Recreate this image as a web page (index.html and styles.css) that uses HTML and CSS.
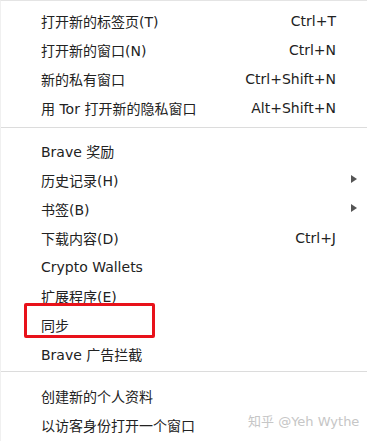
FILE: index.html
```html
<!DOCTYPE html>
<html lang="zh-CN">
<head>
<meta charset="utf-8">
<link rel="stylesheet" href="styles.css">
</head>
<body>
<div class="menu">
  <div class="section first">
    <div class="row"><span class="label">打开新的标签页(T)</span><span class="key">Ctrl+T</span></div>
    <div class="row"><span class="label">打开新的窗口(N)</span><span class="key">Ctrl+N</span></div>
    <div class="row"><span class="label">新的私有窗口</span><span class="key">Ctrl+Shift+N</span></div>
    <div class="row"><span class="label">用 Tor 打开新的隐私窗口</span><span class="key">Alt+Shift+N</span></div>
  </div>
  <div class="sep sep-a"></div>
  <div class="section">
    <div class="row"><span class="label">Brave 奖励</span></div>
    <div class="row"><span class="label">历史记录(H)</span><span class="arrow"></span></div>
    <div class="row"><span class="label">书签(B)</span><span class="arrow"></span></div>
    <div class="row"><span class="label">下载内容(D)</span><span class="key">Ctrl+J</span></div>
    <div class="row"><span class="label">Crypto Wallets</span></div>
    <div class="row"><span class="label">扩展程序(E)</span></div>
    <div class="row highlighted"><span class="label">同步</span><span class="redbox"></span></div>
    <div class="row"><span class="label">Brave 广告拦截</span></div>
  </div>
  <div class="sep sep-b"></div>
  <div class="section">
    <div class="row"><span class="label">创建新的个人资料</span></div>
    <div class="row"><span class="label">以访客身份打开一个窗口</span></div>
  </div>
  <div class="watermark">知乎 @Yeh Wythe</div>
</div>
</body>
</html>
```
FILE: styles.css
```css
html, body {
  margin: 0;
  padding: 0;
  background: #ffffff;
}
body {
  width: 367px;
  height: 441px;
  overflow: hidden;
}
.menu {
  position: relative;
  height: 441px;
  box-sizing: border-box;
  border-top: 1px solid #e4e4e4;
  border-left: 1px solid #f0f0f0;
  font-family: "DejaVu Sans", "Noto Sans CJK SC", sans-serif;
  font-size: 14px;
  color: #222222;
}
.section.first {
  padding-top: 5px;
}
.row {
  position: relative;
  height: 29px;
  display: flex;
  align-items: center;
  padding-left: 40px;
  padding-right: 31px;
}
.label {
  flex: 1;
  white-space: nowrap;
}
.key {
  white-space: nowrap;
}
.arrow {
  position: absolute;
  right: 10px;
  top: 10px;
  width: 0;
  height: 0;
  border-top: 4px solid transparent;
  border-bottom: 4px solid transparent;
  border-left: 6px solid #555555;
}
.sep {
  height: 1px;
  background: #dcdcdc;
}
.sep-a {
  margin: 5px 0 8px;
}
.sep-b {
  margin: 3px 0 9px;
}
.redbox {
  position: absolute;
  left: 23px;
  top: -7px;
  width: 131px;
  height: 35px;
  box-sizing: border-box;
  border: 3.5px solid #e8121a;
  border-radius: 2px;
}
.watermark {
  position: absolute;
  left: 247px;
  top: 410px;
  font-family: "DejaVu Sans", "Noto Sans CJK SC", sans-serif;
  font-size: 13px;
  color: #c6c6c6;
  white-space: nowrap;
}
```
